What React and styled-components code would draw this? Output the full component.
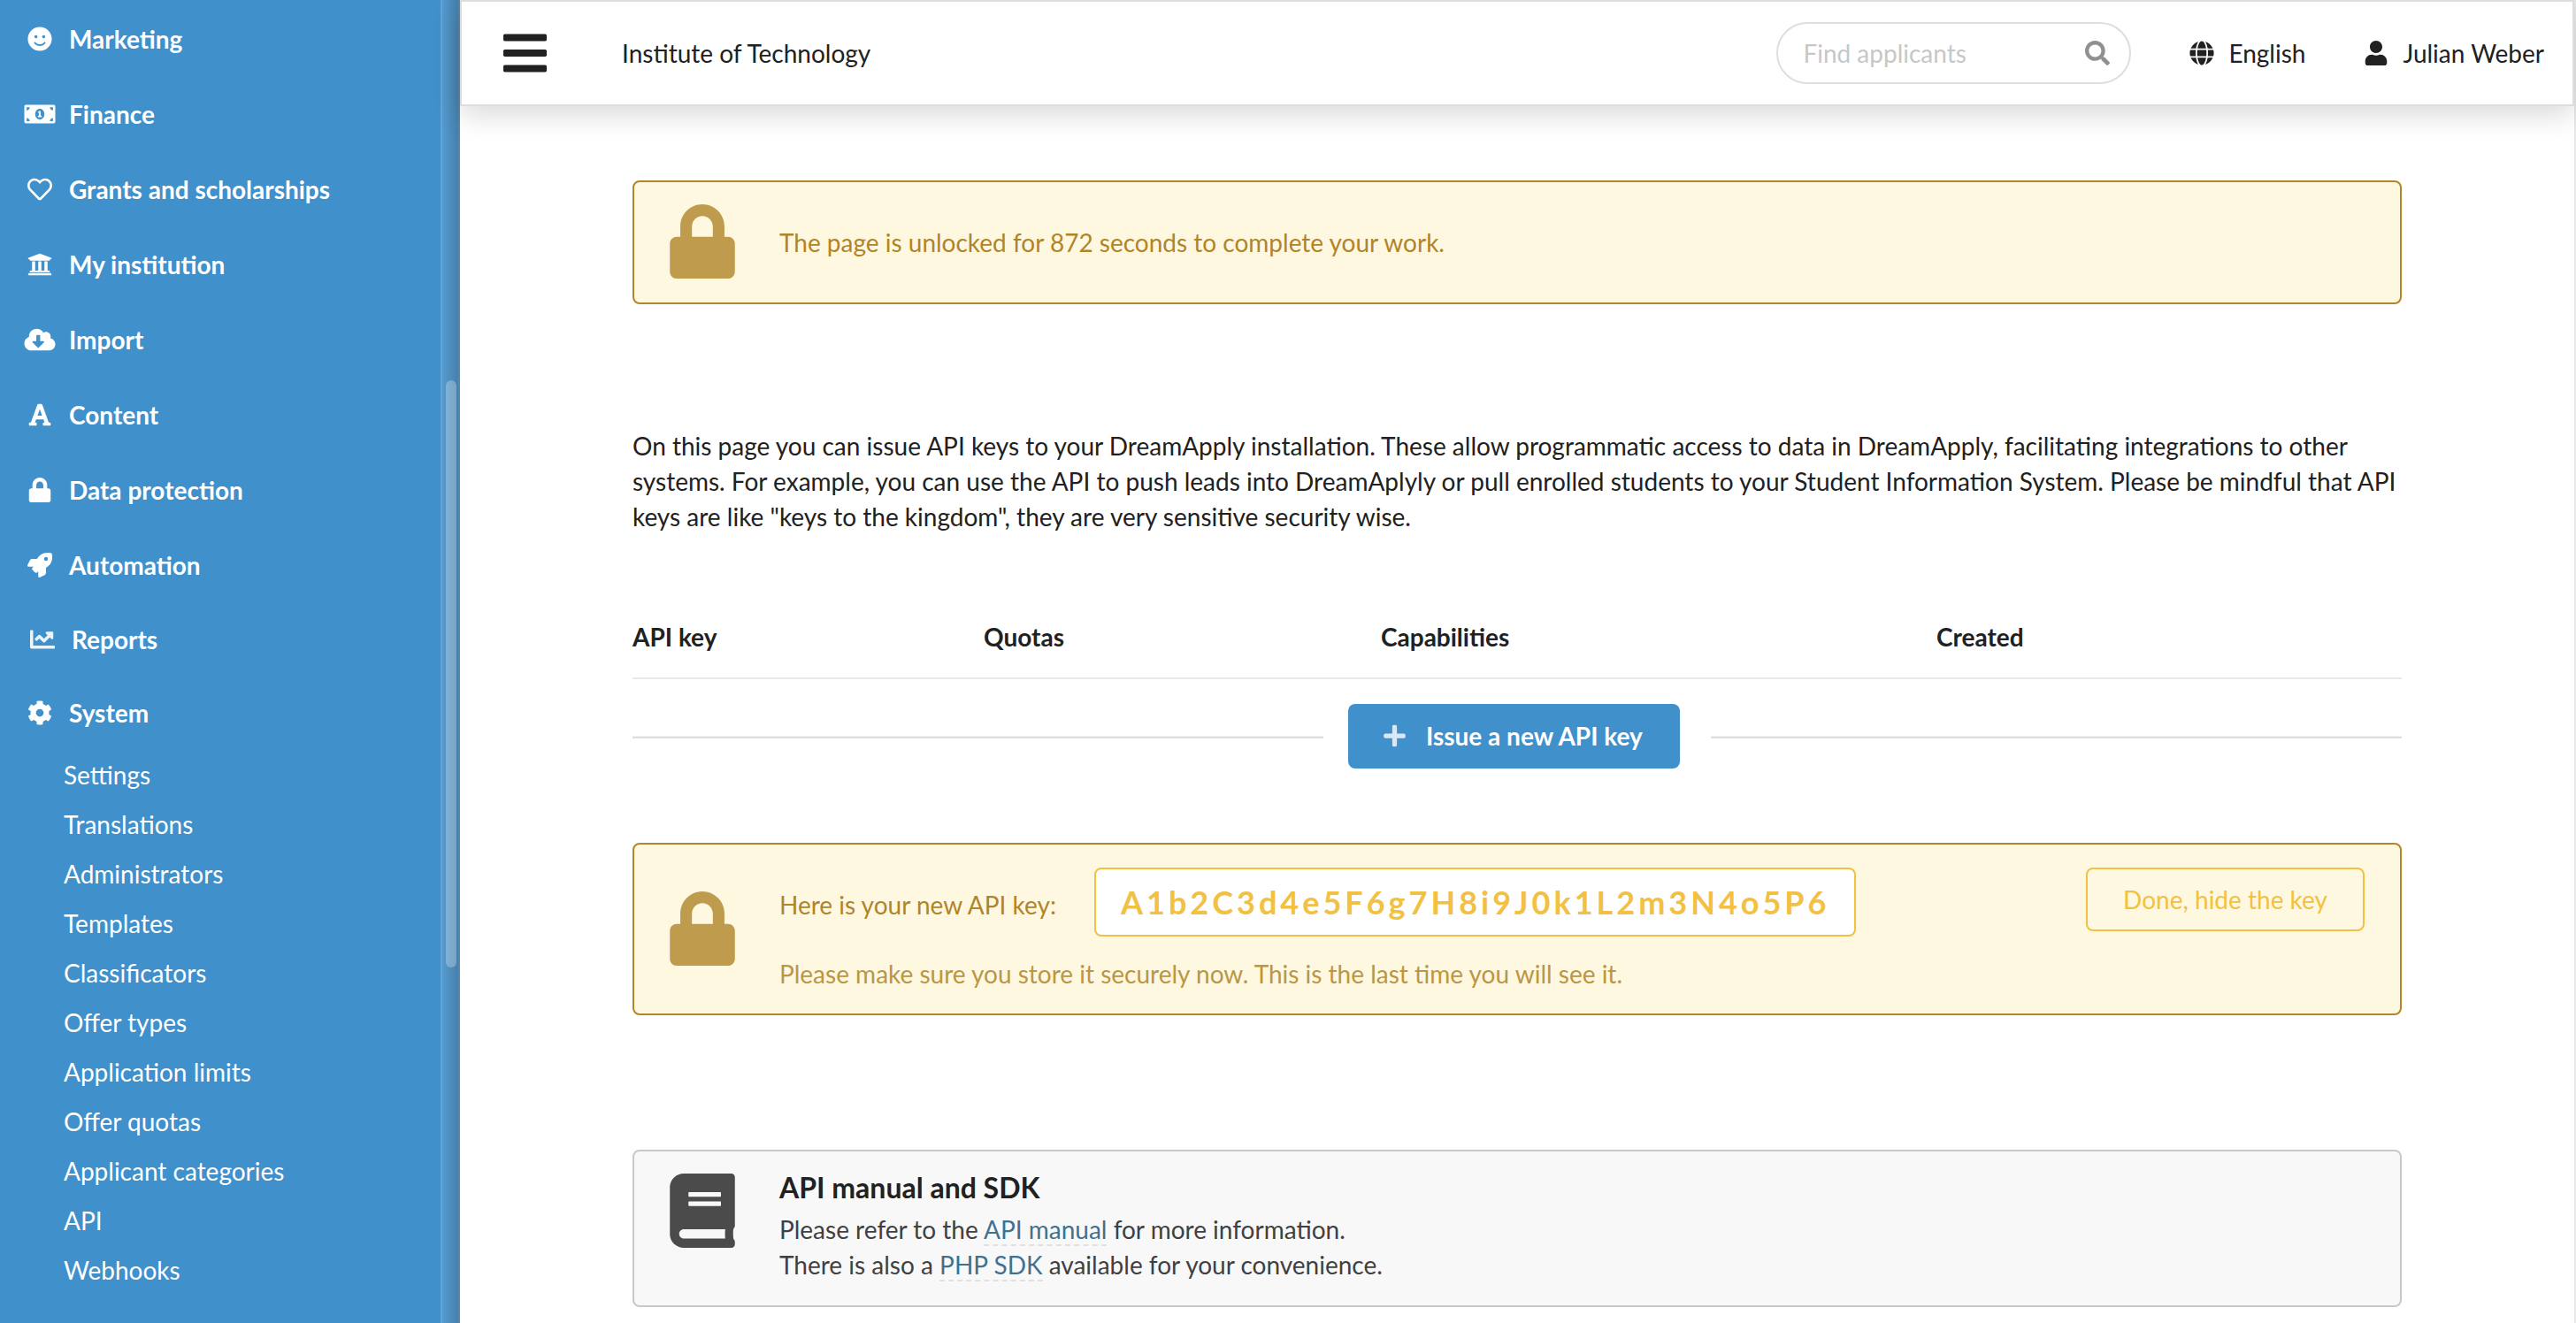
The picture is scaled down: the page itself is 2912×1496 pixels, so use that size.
import React from 'react';
import styled, { createGlobalStyle } from 'styled-components';
import {
  FaBars, FaBook, FaChartLine, FaCloudDownloadAlt, FaCog, FaFont, FaGlobe, FaLock,
  FaMoneyBillAlt, FaPlus, FaRegHeart, FaRocket, FaSearch, FaSmile, FaUniversity, FaUser,
} from 'react-icons/fa';

const GlobalStyle = createGlobalStyle`
  * { box-sizing: border-box; }
  body {
    margin: 0;
    background: #fff;
    color: #212121;
    font-family: Lato, "Liberation Sans", sans-serif;
    font-size: 28px;
    line-height: 40px;
  }
`;

const Page = styled.div`
  display: flex;
  width: 2912px;
  height: 1496px;
  overflow: hidden;
`;

const Sidebar = styled.aside`
  display: flex;
  flex: none;
  width: 520px;
  background: #4090cc;
  color: #fff;
`;

const Menu = styled.nav`
  flex: 1;
  padding-top: 1px;
`;

const MenuItem = styled.a`
  display: flex;
  align-items: center;
  gap: 15px;
  height: ${(p) => (p.$short ? 83 : 85)}px;
  padding-left: ${(p) => (p.$shift ? 30 : 27)}px;
  font-weight: 700;

  svg {
    width: 36px;
    height: 28px;
    opacity: ${(p) => (p.$shift ? 0.9 : 1)};
  }
`;

const SubMenu = styled.div`
  display: flex;
  flex-direction: column;
  padding-top: 1px;
`;

const SubItem = styled.a`
  height: 56px;
  padding-left: 72px;
  line-height: 56px;
`;

const ScrollTrack = styled.div`
  width: 22px;
  padding: 430px 2px 0 4px;
  border-left: 2px solid #63a4d8;
  border-right: 2px solid #5689b0;
  background: linear-gradient(to right, #559bd0, #467fab);
`;

const ScrollThumb = styled.div`
  width: 12px;
  height: 664px;
  border-radius: 6px;
  background: rgba(255, 255, 255, 0.27);
`;

const Main = styled.div`
  flex: 1;
  border-right: 2px solid #e8e8e8;
`;

const Header = styled.header`
  display: flex;
  align-items: center;
  height: 120px;
  padding: 0 32px 0 47px;
  border: 2px solid #dddddd;
  box-shadow: 0 10px 30px rgba(0, 0, 0, 0.15);
`;

const Burger = styled(FaBars)`
  width: 49px;
  height: 56px;
`;

const Institution = styled.div`
  flex: 1;
  padding-left: 85px;
`;

const SearchBox = styled.div`
  display: flex;
  align-items: center;
  justify-content: space-between;
  width: 401px;
  height: 70px;
  padding: 0 22px 0 28px;
  border: 2px solid #dedede;
  border-radius: 35px;
  color: #c7c7c7;

  svg {
    width: 28px;
    height: 28px;
    color: #909090;
  }
`;

const HeaderLink = styled.a`
  display: flex;
  align-items: center;
  gap: 16px;
  margin-left: 66px;

  svg {
    height: 28px;
    width: 28px;
  }
`;

const Content = styled.main`
  width: 2000px;
  margin: 84px 0 0 195px;
`;

const Message = styled.section`
  display: flex;
  align-items: ${(p) => (p.$top ? 'flex-start' : 'center')};
  height: ${(p) => p.$height}px;
  padding: ${(p) => (p.$top ? 25 : 0)}px 40px 0;
  border: 2px solid ${(p) => (p.$warning ? '#b2862c' : '#c7c8c9')};
  border-radius: 8px;
  background: ${(p) => (p.$warning ? '#fff8e0' : '#f8f8f8')};
  color: ${(p) => (p.$warning ? '#b08529' : '#212121')};

  > svg {
    flex: none;
    width: 74px;
    height: 84px;
    margin: 0 50px 2px 0;
    opacity: 0.8;
  }
`;

const MessageBody = styled.div`
  flex: 1;
`;

const Intro = styled.p`
  margin: 140px 0 0;
`;

const TableHead = styled.div`
  display: grid;
  grid-template-columns: 397px 449px 628px 1fr;
  height: 95px;
  margin-top: 69px;
  padding-top: 27px;
  border-bottom: 2px solid #e8e8e8;
  font-weight: 700;
`;

const IssueRow = styled.div`
  display: flex;
  align-items: center;
  height: 73px;
  margin: 28px 0 84px;
`;

const Line = styled.div`
  width: 781px;
  height: 3px;
  margin-top: 2px;
  border-top: 1px solid #f3f3f3;
  background: #dedede;
`;

const IssueButton = styled.button`
  display: flex;
  align-items: center;
  gap: 22px;
  width: 375px;
  height: 73px;
  margin: 0 35px 0 28px;
  padding: 0 0 1px 39px;
  border: 0;
  border-radius: 8px;
  background: #4090cc;
  color: #fff;
  font: inherit;
  font-weight: 700;

  svg {
    width: 27px;
    height: 28px;
    opacity: 0.8;
  }
`;

const KeyRow = styled.div`
  display: flex;
  align-items: flex-start;
  height: 78px;
  margin-top: 1px;
`;

const KeyLabel = styled.div`
  width: 356px;
  padding-top: 22px;
`;

const KeyValue = styled.div`
  width: 861px;
  height: 78px;
  padding-left: 28px;
  border: 2px solid #f2c043;
  border-radius: 8px;
  background: #fff;
  color: #f2c043;
  font-size: 36px;
  font-weight: 700;
  letter-spacing: 4px;
  line-height: 74px;
`;

const HideButton = styled.button`
  width: 315px;
  height: 72px;
  margin-left: auto;
  border: 2px solid #f2c043;
  border-radius: 8px;
  background: none;
  color: #f2c043;
  font: inherit;
`;

const KeyNote = styled.div`
  margin-top: 22px;
  opacity: 0.85;
`;

const ManualMessage = styled(Message)`
  margin-top: 152px;
`;

const ManualTitle = styled.h2`
  margin: -5px 0 6px;
  font-size: 32px;
  line-height: 42px;
`;

const ManualText = styled.div`
  opacity: 0.85;
`;

const Link = styled.a`
  border-bottom: 2px dashed #dedede;
  color: #22597f;
`;

const menu = [
  { label: 'Marketing', Icon: FaSmile },
  { label: 'Finance', Icon: FaMoneyBillAlt },
  { label: 'Grants and scholarships', Icon: FaRegHeart },
  { label: 'My institution', Icon: FaUniversity },
  { label: 'Import', Icon: FaCloudDownloadAlt },
  { label: 'Content', Icon: FaFont },
  { label: 'Data protection', Icon: FaLock },
  { label: 'Automation', Icon: FaRocket },
  { label: 'Reports', Icon: FaChartLine, short: true, shift: true },
  { label: 'System', Icon: FaCog, short: true },
];

const systemMenu = [
  'Settings', 'Translations', 'Administrators', 'Templates', 'Classificators', 'Offer types',
  'Application limits', 'Offer quotas', 'Applicant categories', 'API', 'Webhooks',
];

const App = () => {
  return (
    <Page>
      <GlobalStyle />
      <Sidebar>
        <Menu>
          {menu.map(({ label, Icon, short, shift }) => (
            <MenuItem key={label} $short={short} $shift={shift}>
              <Icon />
              {label}
            </MenuItem>
          ))}
          <SubMenu>
            {systemMenu.map((label) => (
              <SubItem key={label}>{label}</SubItem>
            ))}
          </SubMenu>
        </Menu>
        <ScrollTrack>
          <ScrollThumb />
        </ScrollTrack>
      </Sidebar>
      <Main>
        <Header>
          <Burger />
          <Institution>Institute of Technology</Institution>
          <SearchBox>
            Find applicants
            <FaSearch />
          </SearchBox>
          <HeaderLink>
            <FaGlobe />
            English
          </HeaderLink>
          <HeaderLink>
            <FaUser />
            Julian Weber
          </HeaderLink>
        </Header>
        <Content>
          <Message $warning $height={140}>
            <FaLock />
            <MessageBody>The page is unlocked for 872 seconds to complete your work.</MessageBody>
          </Message>
          <Intro>
            On this page you can issue API keys to your DreamApply installation. These allow programmatic
            access to data in DreamApply, facilitating integrations to other systems. For example, you can
            use the API to push leads into DreamAplyly or pull enrolled students to your Student Information
            System. Please be mindful that API keys are like "keys to the kingdom", they are very sensitive
            security wise.
          </Intro>
          <TableHead>
            <div>API key</div>
            <div>Quotas</div>
            <div>Capabilities</div>
            <div>Created</div>
          </TableHead>
          <IssueRow>
            <Line />
            <IssueButton>
              <FaPlus />
              Issue a new API key
            </IssueButton>
            <Line />
          </IssueRow>
          <Message $warning $height={195}>
            <FaLock />
            <MessageBody>
              <KeyRow>
                <KeyLabel>Here is your new API key:</KeyLabel>
                <KeyValue>A1b2C3d4e5F6g7H8i9J0k1L2m3N4o5P6</KeyValue>
                <HideButton>Done, hide the key</HideButton>
              </KeyRow>
              <KeyNote>Please make sure you store it securely now. This is the last time you will see it.</KeyNote>
            </MessageBody>
          </Message>
          <ManualMessage $top $height={178}>
            <FaBook />
            <MessageBody>
              <ManualTitle>API manual and SDK</ManualTitle>
              <ManualText>
                Please refer to the <Link>API manual</Link> for more information.
                <br />
                There is also a <Link>PHP SDK</Link> available for your convenience.
              </ManualText>
            </MessageBody>
          </ManualMessage>
        </Content>
      </Main>
    </Page>
  );
};

export default App;
